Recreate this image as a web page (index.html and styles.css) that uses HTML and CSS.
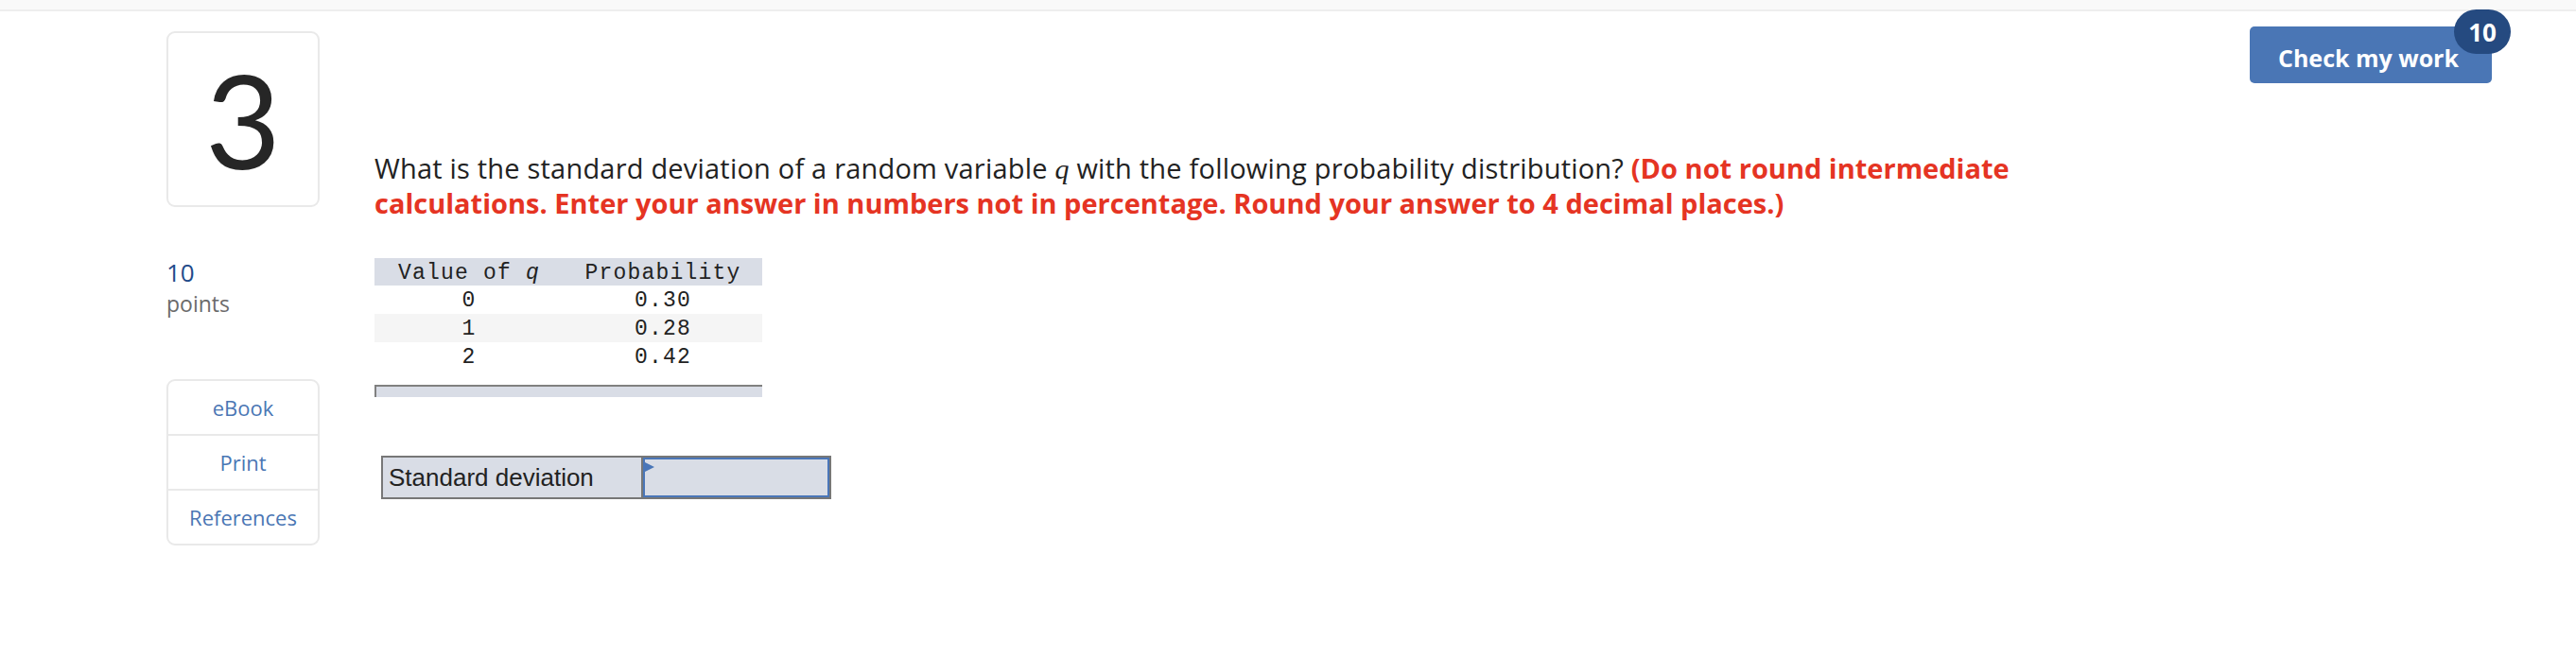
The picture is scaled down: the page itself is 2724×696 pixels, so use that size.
FILE: index.html
```html
<!DOCTYPE html>
<html lang="en">
<head>
<meta charset="utf-8">
<title>Question 3</title>
<link rel="stylesheet" href="styles.css">
</head>
<body>
<div class="topbar"></div>
<div class="page">
  <aside class="side">
    <div class="qnum">3</div>
    <div class="points">
      <div class="pts-num">10</div>
      <div class="pts-label">points</div>
    </div>
    <nav class="tools">
      <a class="tool">eBook</a>
      <a class="tool">Print</a>
      <a class="tool">References</a>
    </nav>
  </aside>
  <main class="content">
    <p class="prompt">What is the standard deviation of a random variable <i class="var">q</i> with the following probability distribution? <strong class="note">(Do not round intermediate calculations. Enter your answer in numbers not in percentage. Round your answer to 4 decimal places.)</strong></p>
    <table class="dist">
      <thead>
        <tr><th class="c1">Value of <i>q</i></th><th class="c2">Probability</th></tr>
      </thead>
      <tbody>
        <tr><td>0</td><td>0.30</td></tr>
        <tr class="alt"><td>1</td><td>0.28</td></tr>
        <tr><td>2</td><td>0.42</td></tr>
      </tbody>
    </table>
    <div class="tbl-foot"></div>
    <div class="answer">
      <div class="ans-label">Standard deviation</div>
      <div class="ans-input"></div>
    </div>
  </main>
  <div class="actions">
    <button class="check">Check my work<span class="badge">10</span></button>
  </div>
</div>
</body>
</html>
```
FILE: styles.css
```css
html, body {
  margin: 0;
  padding: 0;
  background: #ffffff;
}
body {
  font-family: "Open Sans", Lato, sans-serif;
  color: #222222;
}
.topbar {
  height: 10px;
  background: #f9f9f9;
  border-bottom: 2px solid #eeeeee;
}
.page {
  display: flex;
  align-items: flex-start;
  padding-left: 176px;
  padding-right: 89px;
}
.side {
  flex: none;
  width: 162px;
}
.qnum {
  margin-top: 21px;
  height: 182px;
  border: 2px solid #e9e9e9;
  border-radius: 9px;
  display: flex;
  align-items: center;
  justify-content: center;
  font-family: Lato, sans-serif;
  font-size: 138px;
  font-weight: 400;
  color: #262626;
  line-height: 1;
}
.points {
  margin-top: 53px;
}
.pts-num {
  font-size: 26px;
  line-height: 33px;
  color: #1f4b8a;
}
.pts-label {
  margin-top: 1px;
  font-size: 23px;
  line-height: 31px;
  color: #6b6b6b;
}
.tools {
  margin-top: 64px;
  border: 2px solid #e9e9e9;
  border-radius: 9px;
  display: flex;
  flex-direction: column;
}
.tool {
  height: 56px;
  display: flex;
  align-items: center;
  justify-content: center;
  font-size: 22px;
  color: #4a76b4;
}
.tool + .tool {
  border-top: 2px solid #e9e9e9;
}
.content {
  flex: 1;
  margin-left: 58px;
}
.prompt {
  margin: 148px 0 0 0;
  max-width: 1800px;
  font-size: 29px;
  line-height: 36px;
  letter-spacing: 0.2px;
  color: #222222;
}
.var {
  font-family: "Liberation Serif", serif;
  font-style: italic;
  font-size: 30px;
}
.note {
  color: #e53423;
  font-weight: 700;
  letter-spacing: 0;
}
.dist {
  margin-top: 40px;
  border-collapse: collapse;
  width: 410px;
  font-family: "Liberation Mono", monospace;
  font-size: 23px;
  letter-spacing: 1.2px;
  color: #222222;
}
.dist th {
  background: #d9dde6;
  font-weight: 400;
  height: 29px;
  padding: 3px 0 0 0;
  line-height: 26px;
  box-sizing: border-box;
}
.dist th i {
  font-style: italic;
}
.dist .c1 {
  width: 200px;
}
.dist td {
  text-align: center;
  height: 30px;
  padding: 3px 0 0 0;
  line-height: 27px;
  box-sizing: border-box;
}
.dist .alt td {
  background: #f5f5f5;
}
.tbl-foot {
  margin-top: 15px;
  width: 408px;
  height: 11px;
  background: #d9dde6;
  border-top: 2px solid #808080;
  border-left: 2px solid #808080;
}
.answer {
  margin-top: 62px;
  margin-left: 7px;
  display: flex;
  width: 472px;
  height: 42px;
  border: 2px solid #777777;
  background: #d9dde6;
}
.ans-label {
  flex: none;
  width: 267px;
  padding-left: 6px;
  border-right: 2px solid #777777;
  font-family: "Liberation Sans", Arial, sans-serif;
  font-size: 26px;
  line-height: 42px;
  color: #222222;
}
.ans-input {
  position: relative;
  flex: 1;
  border: 2px solid #4a76b8;
}
.ans-input::before {
  content: "";
  position: absolute;
  top: 3px;
  left: 0;
  border-left: 10px solid #4a76b8;
  border-top: 5px solid transparent;
  border-bottom: 5px solid transparent;
}
.actions {
  flex: none;
  padding-top: 16px;
}
.check {
  position: relative;
  width: 256px;
  height: 60px;
  border: none;
  border-radius: 5px;
  background: #4a76b5;
  color: #ffffff;
  font-family: "Open Sans", sans-serif;
  font-weight: 700;
  font-size: 25px;
  padding: 6px 0 0 30px;
  text-align: left;
}
.badge {
  position: absolute;
  top: -18px;
  right: -20px;
  width: 60px;
  height: 47px;
  border-radius: 24px;
  background: #254a80;
  color: #ffffff;
  font-size: 26px;
  font-weight: 700;
  display: flex;
  align-items: center;
  justify-content: center;
}
```
